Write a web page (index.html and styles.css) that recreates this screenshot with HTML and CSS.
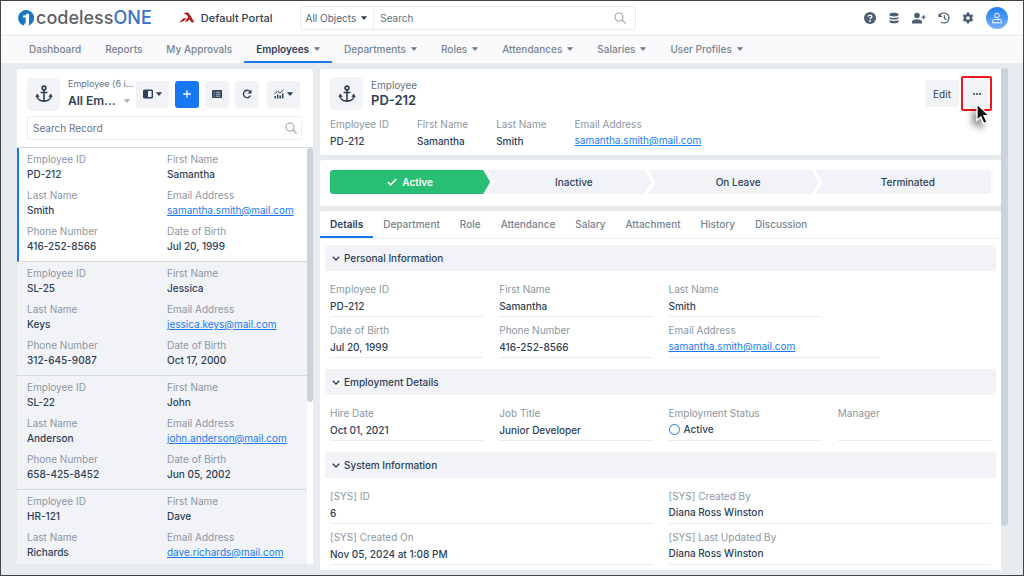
FILE: index.html
```html
<!DOCTYPE html>
<html lang="en">
<head>
<meta charset="utf-8">
<meta name="viewport" content="width=device-width, initial-scale=1">
<title>Employee PD-212 - codelessONE</title>
<link rel="stylesheet" href="styles.css">
</head>
<body>
<svg class="defs" aria-hidden="true">
  <symbol id="anchor" viewBox="0 0 18 18"><g fill="none" stroke="currentColor" stroke-width="1.6"><circle cx="9" cy="3" r="1.9"/><path d="M9 5v11M5.600 7.500h6.800M2 10.500c0 3.500 3 5.600 7 5.600s7-2.100 7-5.600"/></g><path fill="currentColor" d="M.3 12.300 2.100 8.600l2.600 3.200zM17.700 12.300 15.900 8.600l-2.600 3.200z"/></symbol>
  <symbol id="search" viewBox="0 0 12 12"><g fill="none" stroke="currentColor" stroke-width="1.100"><circle cx="5" cy="5" r="4"/><path d="m8 8 3.500 3.500"/></g></symbol>
  <symbol id="caret" viewBox="0 0 6 4"><path fill="currentColor" d="M.4.2h5.200q.5.100.2.600L3.400 3.600q-.4.400-.8 0L.2.800Q-.100.300.4.200z"/></symbol>
  <symbol id="chevron" viewBox="0 0 8 5"><path fill="none" stroke="currentColor" stroke-width="1.300" d="m.8.800 3.200 3.200L7.200.8"/></symbol>
</svg>
<div class="app">
  <header class="topbar">
    <a class="logo" href="#" aria-label="codelessONE">
      <svg width="16" height="16" viewBox="0 0 16 16"><path fill="#1878c0" d="M6.200 15.800A8 8 0 1 1 11 15.500V3.700H8.700C8 5 6.600 5.500 5 5.600v1.800h2.700v6.200H6.200z"/></svg>
      <span class="logo-text">codeless<b>ONE</b></span>
    </a>
    <a class="portal" href="#">
      <svg width="16" height="12" viewBox="0 0 16 12"><path fill="#b5161b" fill-rule="evenodd" d="M4.500 1.500C6 .5 8.500.3 9.600 1L15.500 10.200h-3.200L10.700 7.600 8.300 9.600H5.500L9.300 5.400 8.200 3.400C7 2.300 5.800 2 4.500 1.500zM0 10.500 4.600 6.300h3L4.300 9.200z"/></svg>
      Default Portal
    </a>
    <form class="global-search">
      <button type="button" class="scope">All Objects <svg class="caret"><use href="#caret"/></svg></button>
      <input type="text" placeholder="Search" aria-label="Search">
      <svg class="search-icon"><use href="#search"/></svg>
    </form>
    <div class="tools">
      <button type="button" aria-label="Help"><svg viewBox="0 0 12 12"><circle cx="6" cy="6" r="6" fill="currentColor"/><path d="M4.200 4.700c0-2.200 3.700-2.100 3.600 0C7.800 5.900 6 5.900 6 7.200" fill="none" stroke="#fff" stroke-width="1.300"/><circle cx="6" cy="9" r=".9" fill="#fff"/></svg></button>
      <button type="button" aria-label="Data"><svg viewBox="0 0 12 12"><path fill="currentColor" d="M1.500 2.300C1.500.3 10.500.3 10.500 2.300v1C10.500 4.900 1.500 4.900 1.500 3.300zM1.500 5c2 1.200 7 1.200 9 0v1.300c0 1.600-9 1.600-9 0zM1.500 8c2 1.200 7 1.200 9 0v1.700c0 2-9 2-9 0z"/></svg></button>
      <button type="button" aria-label="Add user"><svg class="wide" viewBox="0 0 14 12"><circle cx="5" cy="3.500" r="2.800" fill="currentColor"/><path fill="currentColor" d="M0 11.500V10c0-3.800 10-3.800 10 0v1.500z"/><path d="M11.600 3.200v4M9.600 5.200h4" stroke="currentColor" stroke-width="1.200"/></svg></button>
      <button type="button" aria-label="Recent"><svg viewBox="0 0 12 12"><path fill="none" stroke="currentColor" stroke-width="1.200" d="M1.600 3.600A5 5 0 1 1 3 10M6.300 3.200v3l2 1.800"/><path fill="currentColor" d="M.5 1v4h4z"/></svg></button>
      <button type="button" aria-label="Settings"><svg viewBox="0 0 12 12"><circle cx="6" cy="6" r="3" fill="none" stroke="currentColor" stroke-width="2.400"/><path stroke="currentColor" stroke-width="2.400" d="M6 .6v1.800M6 9.600v1.800M1.300 3.300l1.600.9M9.100 7.800l1.600.9M1.300 8.700l1.600-.9M9.100 4.200l1.600-.9"/></svg></button>
      <button type="button" class="avatar" aria-label="Account"><svg viewBox="0 0 12 12"><g fill="none" stroke="#fff" stroke-width="1"><circle cx="6" cy="3.500" r="2.300"/><path d="M1.500 10.800V9.300c0-1 .8-1.800 1.800-1.800h5.400c1 0 1.800.8 1.800 1.800v1.500z"/></g></svg></button>
    </div>
  </header>
  <nav class="mainnav">
    <a href="#">Dashboard</a>
    <a href="#">Reports</a>
    <a href="#">My Approvals</a>
    <a href="#" class="active">Employees <svg class="caret"><use href="#caret"/></svg></a>
    <a href="#">Departments <svg class="caret"><use href="#caret"/></svg></a>
    <a href="#">Roles <svg class="caret"><use href="#caret"/></svg></a>
    <a href="#">Attendances <svg class="caret"><use href="#caret"/></svg></a>
    <a href="#">Salaries <svg class="caret"><use href="#caret"/></svg></a>
    <a href="#">User Profiles <svg class="caret"><use href="#caret"/></svg></a>
  </nav>
  <div class="workspace">
    <aside class="sidebar">
      <div class="list-head">
        <div class="list-title">
          <span class="object-icon"><svg><use href="#anchor"/></svg></span>
          <div class="view">
            <span class="kicker">Employee (6 i...</span>
            <button type="button" class="view-name">All Em... <svg class="caret"><use href="#caret"/></svg></button>
          </div>
          <button type="button" class="btn" aria-label="Layout"><svg class="glyph" viewBox="0 0 10 10"><rect x=".7" y="1.200" width="8.600" height="7.600" rx=".8" fill="none" stroke="currentColor" stroke-width="1.400"/><path fill="currentColor" d="M1 1.500h4v7H1z"/></svg><svg class="caret"><use href="#caret"/></svg></button>
          <button type="button" class="btn primary" aria-label="Add"><svg class="glyph" viewBox="0 0 10 10"><path d="M5 1.200v7.600M1.200 5h7.600" stroke="currentColor" stroke-width="1.300"/></svg></button>
          <button type="button" class="btn" aria-label="List view"><svg class="glyph" viewBox="0 0 10 10"><rect y="1" width="10" height="8" rx="1" fill="currentColor"/><path d="M1.500 3.200h1.200M3.800 3.200h4.700M1.500 5.200h1.200M3.800 5.200h4.700M1.500 7.200h1.200M3.800 7.200h4.700" stroke="#f1f3f7" stroke-width=".7"/></svg></button>
          <button type="button" class="btn" aria-label="Refresh"><svg class="glyph" viewBox="0 0 10 10"><path d="M8 2.600A3.700 3.700 0 1 0 8.500 6.500" fill="none" stroke="currentColor" stroke-width="1.400"/><path fill="currentColor" d="M9.500.5v4h-4z"/></svg></button>
          <button type="button" class="btn chart" aria-label="Charts"><svg class="glyph" viewBox="0 0 10 10"><path d="M1.200 9.500V7M3.700 9.500V5.500M6.200 9.500v-3M8.700 9.500V4.500" stroke="currentColor" stroke-width="1.500"/><path d="m.5 5 3-2.500L6 4l3.500-3.200" fill="none" stroke="currentColor"/></svg><svg class="caret"><use href="#caret"/></svg></button>
        </div>
        <div class="record-search">
          <input type="text" placeholder="Search Record" aria-label="Search Record">
          <svg class="search-icon"><use href="#search"/></svg>
        </div>
      </div>
      <div class="records">
        <div class="record-list">
          <dl class="record selected">
            <div><dt>Employee ID</dt><dd>PD-212</dd></div><div><dt>First Name</dt><dd>Samantha</dd></div>
            <div><dt>Last Name</dt><dd>Smith</dd></div><div><dt>Email Address</dt><dd><a href="#">samantha.smith@mail.com</a></dd></div>
            <div><dt>Phone Number</dt><dd>416-252-8566</dd></div><div><dt>Date of Birth</dt><dd>Jul 20, 1999</dd></div>
          </dl>
          <dl class="record">
            <div><dt>Employee ID</dt><dd>SL-25</dd></div><div><dt>First Name</dt><dd>Jessica</dd></div>
            <div><dt>Last Name</dt><dd>Keys</dd></div><div><dt>Email Address</dt><dd><a href="#">jessica.keys@mail.com</a></dd></div>
            <div><dt>Phone Number</dt><dd>312-645-9087</dd></div><div><dt>Date of Birth</dt><dd>Oct 17, 2000</dd></div>
          </dl>
          <dl class="record">
            <div><dt>Employee ID</dt><dd>SL-22</dd></div><div><dt>First Name</dt><dd>John</dd></div>
            <div><dt>Last Name</dt><dd>Anderson</dd></div><div><dt>Email Address</dt><dd><a href="#">john.anderson@mail.com</a></dd></div>
            <div><dt>Phone Number</dt><dd>658-425-8452</dd></div><div><dt>Date of Birth</dt><dd>Jun 05, 2002</dd></div>
          </dl>
          <dl class="record">
            <div><dt>Employee ID</dt><dd>HR-121</dd></div><div><dt>First Name</dt><dd>Dave</dd></div>
            <div><dt>Last Name</dt><dd>Richards</dd></div><div><dt>Email Address</dt><dd><a href="#">dave.richards@mail.com</a></dd></div>
          </dl>
        </div>
        <div class="track"><span class="thumb list-thumb"></span></div>
      </div>
    </aside>
    <main class="detail">
      <section class="card summary">
        <div class="summary-top">
          <span class="object-icon"><svg><use href="#anchor"/></svg></span>
          <div class="record-title"><span class="kicker">Employee</span><h1>PD-212</h1></div>
          <button type="button" class="btn">Edit</button>
          <div class="more">
            <button type="button" class="btn" aria-label="More actions"><svg width="8" height="2" viewBox="0 0 8 2" fill="currentColor"><circle cx="1" cy="1" r="1"/><circle cx="4" cy="1" r="1"/><circle cx="7" cy="1" r="1"/></svg></button>
            <svg class="pointer" viewBox="0 0 14 22"><path fill="#111" stroke="#fff" stroke-width="1.300" d="M1 1v16.500l3.800-3.600 3 6.600 3.200-1.400-3-6.500h5z"/></svg>
          </div>
        </div>
        <dl class="highlights">
          <div><dt>Employee ID</dt><dd>PD-212</dd></div>
          <div><dt>First Name</dt><dd>Samantha</dd></div>
          <div><dt>Last Name</dt><dd>Smith</dd></div>
          <div><dt>Email Address</dt><dd class="rich"><a href="#">samantha.smith@mail.com</a></dd></div>
        </dl>
      </section>
      <section class="card stages">
        <button type="button" class="stage current"><svg width="10" height="8" viewBox="0 0 10 8"><path d="m.8 4 2.800 2.900L9.300 1" fill="none" stroke="currentColor" stroke-width="1.600"/></svg>Active</button>
        <button type="button" class="stage">Inactive</button>
        <button type="button" class="stage">On Leave</button>
        <button type="button" class="stage">Terminated</button>
      </section>
      <section class="card body">
        <nav class="tabs">
          <a href="#" class="active">Details</a><a href="#">Department</a><a href="#">Role</a><a href="#">Attendance</a><a href="#">Salary</a><a href="#">Attachment</a><a href="#">History</a><a href="#">Discussion</a>
        </nav>
        <div class="groups">
          <h2><svg class="chevron"><use href="#chevron"/></svg>Personal Information</h2>
          <dl class="fields">
            <div><dt>Employee ID</dt><dd>PD-212</dd></div>
            <div><dt>First Name</dt><dd>Samantha</dd></div>
            <div><dt>Last Name</dt><dd>Smith</dd></div>
            <div class="new-row"><dt>Date of Birth</dt><dd>Jul 20, 1999</dd></div>
            <div><dt>Phone Number</dt><dd>416-252-8566</dd></div>
            <div class="long"><dt>Email Address</dt><dd class="rich"><a href="#">samantha.smith@mail.com</a></dd></div>
          </dl>
          <h2><svg class="chevron"><use href="#chevron"/></svg>Employment Details</h2>
          <dl class="fields">
            <div><dt>Hire Date</dt><dd>Oct 01, 2021</dd></div>
            <div><dt>Job Title</dt><dd>Junior Developer</dd></div>
            <div><dt>Employment Status</dt><dd class="rich status">Active</dd></div>
            <div><dt>Manager</dt><dd></dd></div>
          </dl>
          <h2><svg class="chevron"><use href="#chevron"/></svg>System Information</h2>
          <dl class="fields two">
            <div><dt>[SYS] ID</dt><dd>6</dd></div>
            <div><dt>[SYS] Created By</dt><dd class="rich">Diana Ross Winston</dd></div>
            <div><dt>[SYS] Created On</dt><dd>Nov 05, 2024 at 1:08 PM</dd></div>
            <div><dt>[SYS] Last Updated By</dt><dd class="rich">Diana Ross Winston</dd></div>
          </dl>
        </div>
      </section>
    </main>
    <div class="page-track"><span class="thumb page-thumb"></span></div>
  </div>
</div>
</body>
</html>
```
FILE: styles.css
```css
* { box-sizing: border-box; }
body, dl, dd, h1, h2 { margin: 0; }
body {
  font: 400 10px/14px Inter, "Liberation Sans", sans-serif;
  color: #2d3f57;
}
button, input { font: inherit; color: inherit; border: 0; margin: 0; padding: 0; background: none; }
a { color: #1a7af3; }
svg { flex: none; display: block; }
.defs { display: none; }
.caret { width: 6px; height: 4px; }
.search-icon { width: 12px; height: 12px; color: #99a3ad; }

.app {
  height: 100vh;
  display: flex;
  flex-direction: column;
  border: 1px solid #444446;
  background: #e8ecef;
  overflow: hidden;
}

/* Top bar */
.topbar {
  flex: none;
  display: flex;
  align-items: center;
  height: 35px;
  padding: 0 15px 0 17px;
  background: #fff;
  border-bottom: 1px solid #e9ebee;
}
.logo, .portal { display: flex; align-items: center; text-decoration: none; }
.logo { gap: 2px; }
.logo-text { font-size: 18px; line-height: 24px; color: #5d6166; font-weight: 500; }
.logo-text b { color: #3a71c4; font-weight: 500; }
.portal { gap: 6px; margin-left: 27px; font-size: 11px; font-weight: 500; color: #2d3f57; }
.global-search {
  display: flex;
  align-items: center;
  width: 336px;
  height: 24px;
  margin-left: 27px;
  padding-right: 9px;
  border: 1px solid #e9ebee;
  border-radius: 3px;
}
.scope { display: flex; align-items: center; gap: 5px; height: 100%; padding: 0 6px 0 5px; color: #56657a; border-right: 1px solid #e9ebee; }
.scope .caret { color: #2d3f57; }
input { flex: 1; min-width: 0; outline: 0; }
input::placeholder { color: #66737f; opacity: 1; }
.global-search input { padding-left: 6px; }
.tools { display: flex; align-items: center; gap: 12px; margin-left: auto; color: #4c5d76; }
.tools svg { width: 12px; height: 12px; }
.tools .wide { width: 14px; }
.avatar { display: grid; place-items: center; width: 22px; height: 22px; border-radius: 50%; background: linear-gradient(#1f80f0, #77b1fb); }

/* Main navigation */
.mainnav { flex: none; display: flex; height: 27px; padding-left: 16px; background: #fafafc; }
.mainnav a {
  display: flex;
  align-items: center;
  gap: 5px;
  padding: 1px 12px 0;
  border-bottom: 2px solid transparent;
  color: #77848f;
  font-weight: 500;
  text-decoration: none;
}
.mainnav .active { color: #2d3f57; font-weight: 600; border-color: #1877f2; }
.mainnav .caret { color: #6d7c8e; }

/* Workspace */
.workspace { flex: 1; min-height: 0; display: flex; padding: 6px 15px 5px 16px; }
.btn {
  display: flex;
  align-items: center;
  justify-content: center;
  gap: 3px;
  height: 27px;
  min-width: 24px;
  border-radius: 3px;
  background: #f1f3f7;
}
.glyph { width: 10px; height: 10px; }
.primary { background: #1877f2; color: #fff; }
.object-icon {
  flex: none;
  display: grid;
  place-items: center;
  width: 33px;
  height: 33px;
  border-radius: 5px;
  background: #f1f3f7;
}
.object-icon svg { width: 18px; height: 18px; }
.kicker { display: block; color: #66737f; }
dt { color: #8b97a3; }
dd { font-weight: 500; }
dd a { font-weight: 400; }

/* Record list */
.sidebar { flex: none; display: flex; flex-direction: column; width: 296px; margin-bottom: 6px; background: #fff; border-radius: 3px 3px 0 0; overflow: hidden; }
.list-head { padding: 8px 11px 7px 10px; border-bottom: 1px solid #d5dade; }
.list-title { display: flex; align-items: center; gap: 6px; padding-right: 2px; }
.view { flex: 1; min-width: 0; margin-left: 2px; white-space: nowrap; }
.view .kicker { font-size: 9px; }
.view-name { display: flex; align-items: center; justify-content: space-between; width: 100%; font-size: 12px; line-height: 20px; font-weight: 600; }
.view-name .caret { color: #a4adb7; }
.list-title .btn:has(.caret) { width: 33px; }
.chart { margin-left: 2px; }
.record-search { display: flex; align-items: center; height: 24px; margin-top: 5px; padding: 0 4px 0 5px; border: 1px solid #e9ebee; border-radius: 3px; }
.records { flex: 1; min-height: 0; display: flex; }
.record-list { flex: 1; overflow: hidden; background: #f1f3f7; }
.record {
  display: grid;
  grid-template-columns: 1fr 1fr;
  row-gap: 7px;
  padding: 4px 0 8px 10px;
  border-bottom: 1px solid #d5dade;
}
.record dt { line-height: 15px; }
.selected { background: #fff; border-left: 2px solid #1877f2; padding-left: 8px; }
.track { width: 6px; }
.thumb { display: block; background: #cdd3da; border-radius: 3px; }
.list-thumb { height: 61%; }

/* Record detail */
.detail { flex: 1; min-width: 0; display: flex; flex-direction: column; gap: 5px; margin-left: 7px; }
.card { flex: none; background: #fff; border-radius: 3px; }
.summary { padding: 8px 10px 7px; }
.summary-top { display: flex; align-items: center; gap: 8px; }
.record-title { flex: 1; padding-bottom: 2px; }
h1 { font-size: 13px; line-height: 16px; font-weight: 600; }
.summary .btn { min-width: 34px; }
.summary .more { position: relative; margin: -3px -1px -3px -6px; padding: 2px; border: 2px solid #f3151b; border-radius: 2px; }
.summary .more .btn { min-width: 23px; }
.pointer { position: absolute; left: 13px; top: 25px; width: 14px; height: 22px; filter: drop-shadow(-4px 5px 3px rgb(0 0 0 / 45%)); }
.highlights { display: flex; gap: 28px; margin-top: 7px; }
.highlights dd, .fields dd { margin-top: 3px; }
.highlights .rich, .fields .rich { margin-top: 2px; }
.stages { display: grid; grid-template-columns: 160fr 161fr 167fr 172fr; padding: 10px 10px 12px; }
.stage {
  display: flex;
  align-items: center;
  justify-content: center;
  gap: 5px;
  height: 24px;
  margin-left: -3px;
  padding-left: 9px;
  font-weight: 500;
  background: #f1f3f7;
  clip-path: polygon(0 0, calc(100% - 7px) 0, 100% 50%, calc(100% - 7px) 100%, 0 100%, 7px 50%);
}
.stage:last-child { clip-path: polygon(0 0, 100% 0, 100% 100%, 0 100%, 7px 50%); border-radius: 0 3px 3px 0; }
.current { margin-left: 0; padding-left: 0; background: #28bf74; color: #fff; font-weight: 600; border-radius: 3px 0 0 3px; clip-path: polygon(0 0, calc(100% - 7px) 0, 100% 50%, calc(100% - 7px) 100%, 0 100%); }
.body { flex: 1; min-height: 0; overflow: hidden; border-radius: 3px 3px 0 0; }
.tabs { display: flex; height: 28px; border-bottom: 1px solid #f0f1f4; }
.tabs a { padding: 6px 10px 0; border-bottom: 2px solid transparent; color: #77848f; font-weight: 500; text-decoration: none; }
.tabs .active { color: #2d3f57; font-weight: 600; border-color: #1877f2; }
.groups { padding: 6px 5px 0; }
h2 { display: flex; align-items: center; gap: 4px; height: 26px; padding-left: 7px; font-size: 10px; font-weight: 500; background: #f1f3f7; }
.chevron { width: 8px; height: 5px; }
.fields { display: grid; grid-template-columns: repeat(4, minmax(0, 1fr)); gap: 6px 16px; padding: 11px 5px; }
.fields > div { height: 35px; border-bottom: 1px solid #e9ebee; }
.fields .new-row { grid-column: 1; }
.fields .long { width: 210px; }
.two { grid-template-columns: 1fr 1fr; }
.status { display: flex; align-items: center; gap: 4px; }
.status::before { content: ""; width: 9px; height: 9px; border: 1px solid #1877f2; border-radius: 50%; }
.page-track { width: 7px; margin-top: -1px; }
.page-thumb { height: 458px; }
```
